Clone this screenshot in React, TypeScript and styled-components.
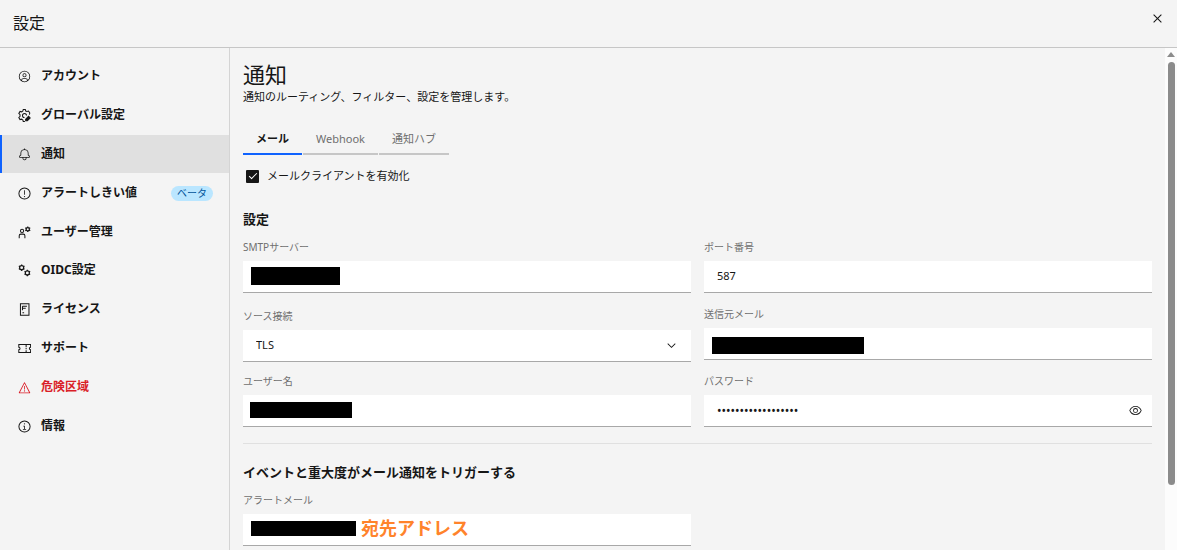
import React from "react";
import styled, { createGlobalStyle } from "styled-components";

const GlobalStyle = createGlobalStyle`
  *, *::before, *::after { box-sizing: border-box; }
  body {
    margin: 0;
    background: #f4f4f4;
    color: #161616;
    font-family: "Noto Sans", "Noto Sans CJK JP", sans-serif;
    font-size: 11px;
    line-height: 18px;
  }
  button, input, select { font: inherit; color: inherit; }
`;

const Page = styled.div`
  display: flex;
  flex-direction: column;
  height: 100vh;
  overflow: hidden;
`;

const Header = styled.header`
  display: flex;
  flex: none;
  align-items: center;
  justify-content: space-between;
  height: 48px;
  padding: 0 11px 2px 13px;
  border-bottom: 1px solid #c6c6c6;
`;

const HeaderTitle = styled.h2`
  margin: 0;
  font-size: 16px;
  line-height: 24px;
  font-weight: 400;
`;

const IconButton = styled.button`
  display: flex;
  padding: 0;
  border: 0;
  background: none;
`;

const CloseButton = styled(IconButton)`
  align-self: flex-start;
  margin-top: 10px;
`;

const Body = styled.div`
  display: flex;
  flex: 1;
  min-height: 0;
`;

const Sidebar = styled.nav`
  flex: none;
  width: 230px;
  padding-top: 9px;
  border-right: 1px solid #d4d4d4;
`;

const NavGroup = styled.ul`
  display: flex;
  flex-direction: column;
  gap: 1px;
  margin: 0;
  padding: 0;
  list-style: none;
`;

const NavLink = styled.a<{ $active?: boolean; $danger?: boolean }>`
  display: flex;
  align-items: center;
  height: 38px;
  padding: 0 16px;
  border-left: 2px solid ${(p) => (p.$active ? "#0f62fe" : "transparent")};
  background: ${(p) => (p.$active ? "#e0e0e0" : "transparent")};
  color: ${(p) => (p.$danger ? "#da1e28" : "#161616")};
  font-size: 12px;
  font-weight: 700;
  text-decoration: none;
`;

const NavLabel = styled.span`
  flex: 1;
  margin-left: 10px;
`;

const Badge = styled.span`
  padding: 0 6px;
  border-radius: 8px;
  background: #bae6ff;
  color: #00539a;
  font-size: 10px;
  font-weight: 400;
  line-height: 15px;
`;

const Main = styled.main`
  flex: 1;
  min-width: 0;
  padding: 14px 13px 0;
  overflow: hidden;
`;

const Title = styled.h1`
  margin: 0;
  font-size: 22px;
  line-height: 24px;
  font-weight: 400;
`;

const Description = styled.p`
  margin: 2px 0 0;
`;

const TabList = styled.div`
  display: flex;
  gap: 1px;
  margin-top: 18px;
`;

const Tab = styled.button<{ $active?: boolean }>`
  height: 31px;
  padding: 0 13px;
  border: 0;
  border-bottom: 2px solid ${(p) => (p.$active ? "#0f62fe" : "#c6c6c6")};
  background: none;
  color: ${(p) => (p.$active ? "#161616" : "#6f6f6f")};
  font-weight: ${(p) => (p.$active ? 700 : 400)};
`;

const CheckLabel = styled.label`
  display: flex;
  align-items: center;
  gap: 8px;
  margin: 12px 0 0 3px;
`;

const Checkbox = styled.input`
  appearance: none;
  display: grid;
  place-items: center;
  width: 13px;
  height: 13px;
  margin: 0;
  border-radius: 1px;
  background: #161616;

  &:checked::after {
    content: "";
    width: 8px;
    height: 4px;
    margin-bottom: 3px;
    border: solid #ffffff;
    border-width: 0 0 1px 1px;
    transform: rotate(-45deg);
  }
`;

const SectionTitle = styled.h3`
  margin: 0;
  font-size: 13px;
  line-height: 20px;
  font-weight: 700;
`;

const ServerSection = styled.section`
  margin-top: 24px;
`;

const AlertSection = styled.section`
  margin-top: 14px;
  padding-top: 18px;
  border-top: 1px solid #e0e0e0;
`;

const FieldGrid = styled.div`
  display: grid;
  grid-template-columns: 1fr 1fr;
  grid-auto-rows: 57px;
  gap: 10px 13px;
  margin-top: 9px;
`;

const Field = styled.div<{ $low?: boolean }>`
  display: flex;
  flex-direction: column;
  gap: 5px;
  align-self: ${(p) => (p.$low ? "end" : "start")};
`;

const FieldLabel = styled.label`
  color: #6f6f6f;
  font-size: 10px;
`;

const Control = styled.div`
  display: flex;
  align-items: center;
  position: relative;
  height: 32px;
  border-bottom: 1px solid #a8a8a8;
  background: #ffffff;
`;

const TextInput = styled.input`
  flex: 1;
  min-width: 0;
  height: 100%;
  padding: 0 13px 2px;
  border: 0;
  background: transparent;
  outline: none;

  &[type="password"] {
    font-size: 12px;
    padding-bottom: 0;
  }
`;

const Select = styled.select`
  appearance: none;
  flex: 1;
  height: 100%;
  padding: 0 13px 2px;
  border: 0;
  background: transparent;
`;

const SelectArrow = styled.span`
  display: flex;
  position: absolute;
  right: 13px;
  pointer-events: none;
`;

const RevealButton = styled(IconButton)`
  margin-right: 10px;
`;

const Mask = styled.span<{ $left: number; $top: number; $width: number; $height: number }>`
  position: absolute;
  left: ${(p) => p.$left}px;
  top: ${(p) => p.$top}px;
  width: ${(p) => p.$width}px;
  height: ${(p) => p.$height}px;
  background: #000000;
`;

const Note = styled.span`
  position: absolute;
  top: 2px;
  left: 118px;
  color: #ff832b;
  font-size: 18px;
  line-height: 24px;
  font-weight: 700;
`;

const Scrollbar = styled.div`
  display: flex;
  flex: none;
  flex-direction: column;
  align-items: center;
  width: 12px;
  padding-top: 4px;
  background: #fcfcfc;
`;

const Thumb = styled.div`
  width: 7px;
  height: 85%;
  margin-top: 5px;
  border-radius: 4px;
  background: #8b8b8b;
`;

const RING = "M16 1A15 15 0 1 0 31 16 15 15 0 0 0 16 1zm0 27.600A12.600 12.600 0 1 1 28.600 16 12.600 12.600 0 0 1 16 28.600z";

const ICONS: Record<string, string[]> = {
  close: ["M17.4 16 24 9.4 22.6 8 16 14.6 9.4 8 8 9.4 14.6 16 8 22.6 9.4 24 16 17.4 22.6 24 24 22.6z"],
  chevron: ["M16 22 6 12 7.4 10.6 16 19.2 24.6 10.6 26 12z"],
  account: [
    "M16 8a5 5 0 1 0 5 5A5 5 0 0 0 16 8Zm0 8a3 3 0 1 1 3-3A3 3 0 0 1 16 16Z",
    "M16 2A14 14 0 1 0 30 16 14 14 0 0 0 16 2ZM10 26.4V25a3 3 0 0 1 3-3h6a3 3 0 0 1 3 3v1.4a11.9 11.9 0 0 1-12 0Zm14-1.5A5 5 0 0 0 19 20H13a5 5 0 0 0-5 4.9 12 12 0 1 1 16 0Z",
  ],
  bell: [
    "M28.7 19.3 26 16.6V13a10 10 0 0 0-9-9.95V1H15V3.05A10 10 0 0 0 6 13v3.6L3.3 19.3A1 1 0 0 0 3 20v3a1 1 0 0 0 1 1h7v.8a5.15 5.15 0 0 0 4.5 5.2A5 5 0 0 0 21 25V24h7a1 1 0 0 0 1-1V20A1 1 0 0 0 28.7 19.3ZM19 25a3 3 0 0 1-6 0V24h6Zm8-3H5V20.4L7.7 17.7A1 1 0 0 0 8 17V13a8 8 0 0 1 16 0v4a1 1 0 0 0 .3.7L27 20.4Z",
  ],
  threshold: [RING, "M15 8h2v11h-2z", "M16 22a1.5 1.5 0 1 0 1.5 1.5A1.5 1.5 0 0 0 16 22z"],
  info: [RING, "M17 22V14H13v2h2v6H12v2h8V22Z", "M16 8a1.5 1.5 0 1 0 1.5 1.5A1.5 1.5 0 0 0 16 8Z"],
  danger: [
    "M16 23a1.5 1.5 0 1 0 1.5 1.5A1.5 1.5 0 0 0 16 23Z",
    "M15 12h2v9h-2z",
    "M29 30H3a1 1 0 0 1-.89-1.46l13-25a1 1 0 0 1 1.78 0l13 25A1 1 0 0 1 29 30ZM4.65 28H27.35L16 6.17Z",
  ],
  view: [
    "M30.94 15.66A16.69 16.69 0 0 0 16 5 16.69 16.69 0 0 0 1.06 15.66a1 1 0 0 0 0 .68A16.69 16.69 0 0 0 16 27 16.69 16.69 0 0 0 30.94 16.34 1 1 0 0 0 30.94 15.66ZM16 25c-5.3 0-10.9-3.93-12.93-9C5.1 10.93 10.7 7 16 7s10.9 3.93 12.93 9C26.9 21.07 21.3 25 16 25Z",
    "M16 10a6 6 0 1 0 6 6A6 6 0 0 0 16 10Zm0 10a4 4 0 1 1 4-4A4 4 0 0 1 16 20Z",
  ],
};

function Icon({ name, size = 13 }: { name: string; size?: number }) {
  return (
    <svg width={size} height={size} viewBox="0 0 32 32" fill="currentColor" aria-hidden="true">
      {ICONS[name].map((d) => (
        <path key={d} d={d} fillRule="evenodd" />
      ))}
    </svg>
  );
}

function Cog({ x, y, r }: { x: number; y: number; r: number }) {
  return (
    <g transform={`translate(${x} ${y})`}>
      <circle r={r} strokeWidth="3" />
      {[0, 60, 120, 180, 240, 300].map((a) => (
        <path key={a} d={`M0 ${-r}v-3`} strokeWidth="3" transform={`rotate(${a})`} />
      ))}
    </g>
  );
}

const DRAWINGS: Record<string, React.ReactNode> = {
  settings: (
    <>
      <path d="M28 14 29 10 26 5l-4 1-3-1-1-4h-5l-1 4-3 2-4-1-3 5 3 3v4l-3 3 3 5 4-1 3 2 1 4h4" />
      <path d="M21 16a5 5 0 1 0-5 5" />
      <path d="M19 29v-4l7-7 4 4-7 7z" fill="currentColor" />
    </>
  ),
  users: (
    <>
      <circle cx="10" cy="12" r="4" />
      <path d="M3 30v-6a4 4 0 0 1 4-4h6a4 4 0 0 1 4 4v6" />
      <Cog x={24} y={8} r={4} />
    </>
  ),
  oidc: (
    <>
      <Cog x={9} y={9} r={5} />
      <Cog x={23} y={22} r={5} />
    </>
  ),
  license: <path d="M6 2h21v28H6zM11 8h11M11 13h8M11 8v10M11 24h4" />,
  ticket: <path d="M2 6h29v7a3 3 0 0 0 0 6v7H2v-7a3 3 0 0 0 0-6zM20 7v5M20 14v4M20 20v5" />,
};

function LineIcon({ name }: { name: string }) {
  return (
    <svg width="13" height="13" viewBox="0 0 32 32" fill="none" stroke="currentColor" strokeWidth="2.5" aria-hidden="true">
      {DRAWINGS[name]}
    </svg>
  );
}

interface NavItem {
  icon: string;
  label: string;
  active?: boolean;
  danger?: boolean;
  badge?: string;
}

const NAV: NavItem[][] = [
  [
    { icon: "account", label: "アカウント" },
    { icon: "settings", label: "グローバル設定" },
    { icon: "bell", label: "通知", active: true },
    { icon: "threshold", label: "アラートしきい値", badge: "ベータ" },
    { icon: "users", label: "ユーザー管理" },
  ],
  [
    { icon: "oidc", label: "OIDC設定" },
    { icon: "license", label: "ライセンス" },
    { icon: "ticket", label: "サポート" },
    { icon: "danger", label: "危険区域", danger: true },
    { icon: "info", label: "情報" },
  ],
];

export default function App() {
  return (
    <Page>
      <GlobalStyle />
      <Header>
        <HeaderTitle>設定</HeaderTitle>
        <CloseButton type="button" aria-label="閉じる">
          <Icon name="close" size={17} />
        </CloseButton>
      </Header>
      <Body>
        <Sidebar>
          {NAV.map((group) => (
            <NavGroup key={group[0].label}>
              {group.map((item) => (
                <li key={item.label}>
                  <NavLink href="#" $active={item.active} $danger={item.danger}>
                    {ICONS[item.icon] ? <Icon name={item.icon} /> : <LineIcon name={item.icon} />}
                    <NavLabel>{item.label}</NavLabel>
                    {item.badge && <Badge>{item.badge}</Badge>}
                  </NavLink>
                </li>
              ))}
            </NavGroup>
          ))}
        </Sidebar>
        <Main>
          <Title>通知</Title>
          <Description>通知のルーティング、フィルター、設定を管理します。</Description>
          <TabList role="tablist">
            <Tab type="button" role="tab" aria-selected="true" $active>メール</Tab>
            <Tab type="button" role="tab" aria-selected="false">Webhook</Tab>
            <Tab type="button" role="tab" aria-selected="false">通知ハブ</Tab>
          </TabList>
          <CheckLabel>
            <Checkbox type="checkbox" defaultChecked />
            メールクライアントを有効化
          </CheckLabel>
          <ServerSection>
            <SectionTitle>設定</SectionTitle>
            <FieldGrid>
              <Field>
                <FieldLabel htmlFor="smtp">SMTPサーバー</FieldLabel>
                <Control>
                  <TextInput id="smtp" />
                  <Mask $left={8} $top={6} $width={89} $height={18} />
                </Control>
              </Field>
              <Field>
                <FieldLabel htmlFor="port">ポート番号</FieldLabel>
                <Control>
                  <TextInput id="port" defaultValue="587" />
                </Control>
              </Field>
              <Field $low>
                <FieldLabel htmlFor="security">ソース接続</FieldLabel>
                <Control>
                  <Select id="security" defaultValue="TLS">
                    <option>TLS</option>
                  </Select>
                  <SelectArrow>
                    <Icon name="chevron" />
                  </SelectArrow>
                </Control>
              </Field>
              <Field>
                <FieldLabel htmlFor="sender">送信元メール</FieldLabel>
                <Control>
                  <TextInput id="sender" />
                  <Mask $left={8} $top={9} $width={152} $height={17} />
                </Control>
              </Field>
              <Field>
                <FieldLabel htmlFor="user">ユーザー名</FieldLabel>
                <Control>
                  <TextInput id="user" />
                  <Mask $left={7} $top={7} $width={102} $height={16} />
                </Control>
              </Field>
              <Field>
                <FieldLabel htmlFor="password">パスワード</FieldLabel>
                <Control>
                  <TextInput id="password" type="password" defaultValue="abcdefghijklmnopqr" />
                  <RevealButton type="button" aria-label="パスワードを表示">
                    <Icon name="view" />
                  </RevealButton>
                </Control>
              </Field>
            </FieldGrid>
          </ServerSection>
          <AlertSection>
            <SectionTitle>イベントと重大度がメール通知をトリガーする</SectionTitle>
            <FieldGrid>
              <Field>
                <FieldLabel htmlFor="alert">アラートメール</FieldLabel>
                <Control>
                  <TextInput id="alert" />
                  <Mask $left={8} $top={7} $width={105} $height={15} />
                  <Note>宛先アドレス</Note>
                </Control>
              </Field>
            </FieldGrid>
          </AlertSection>
        </Main>
        <Scrollbar aria-hidden="true">
          <svg width="8" height="5" viewBox="0 0 8 5" fill="#8b8b8b">
            <path d="M4 0 8 5H0z" />
          </svg>
          <Thumb />
        </Scrollbar>
      </Body>
    </Page>
  );
}
